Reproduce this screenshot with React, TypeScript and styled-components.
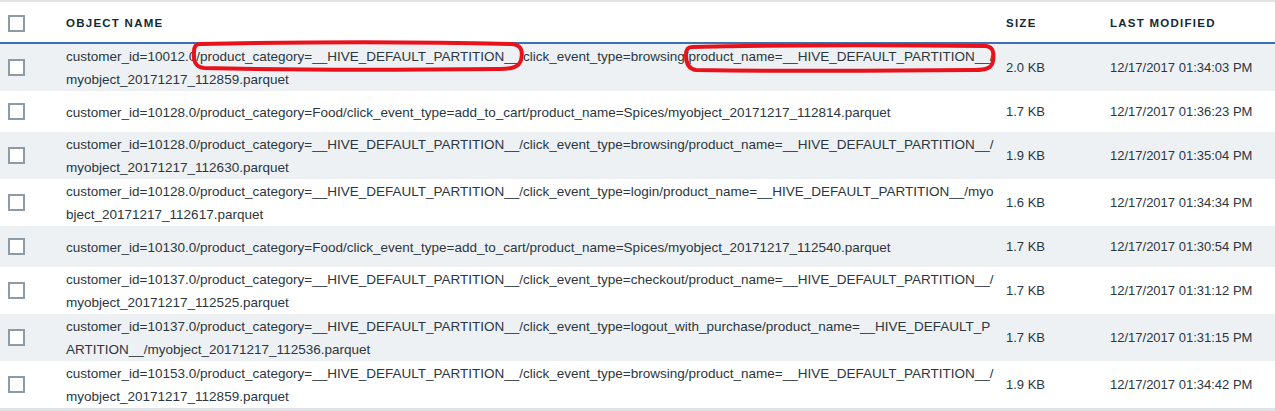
import React from 'react';
import styled, { createGlobalStyle } from 'styled-components';

const GlobalStyle = createGlobalStyle`
    html, body {
        margin: 0;
        padding: 0;
        background: #ffffff;
    }
    body {
        font-family: "Liberation Sans", Arial, sans-serif;
        color: #2b3641;
    }
`;

type ObjectRow = {
    lines: string[];
    size: string;
    modified: string;
};

const rows: ObjectRow[] = [
    {
        lines: [
            'customer_id=10012.0/product_category=__HIVE_DEFAULT_PARTITION__/click_event_type=browsing/product_name=__HIVE_DEFAULT_PARTITION__/',
            'myobject_20171217_112859.parquet',
        ],
        size: '2.0 KB',
        modified: '12/17/2017 01:34:03 PM',
    },
    {
        lines: ['customer_id=10128.0/product_category=Food/click_event_type=add_to_cart/product_name=Spices/myobject_20171217_112814.parquet'],
        size: '1.7 KB',
        modified: '12/17/2017 01:36:23 PM',
    },
    {
        lines: [
            'customer_id=10128.0/product_category=__HIVE_DEFAULT_PARTITION__/click_event_type=browsing/product_name=__HIVE_DEFAULT_PARTITION__/',
            'myobject_20171217_112630.parquet',
        ],
        size: '1.9 KB',
        modified: '12/17/2017 01:35:04 PM',
    },
    {
        lines: [
            'customer_id=10128.0/product_category=__HIVE_DEFAULT_PARTITION__/click_event_type=login/product_name=__HIVE_DEFAULT_PARTITION__/myo',
            'bject_20171217_112617.parquet',
        ],
        size: '1.6 KB',
        modified: '12/17/2017 01:34:34 PM',
    },
    {
        lines: ['customer_id=10130.0/product_category=Food/click_event_type=add_to_cart/product_name=Spices/myobject_20171217_112540.parquet'],
        size: '1.7 KB',
        modified: '12/17/2017 01:30:54 PM',
    },
    {
        lines: [
            'customer_id=10137.0/product_category=__HIVE_DEFAULT_PARTITION__/click_event_type=checkout/product_name=__HIVE_DEFAULT_PARTITION__/',
            'myobject_20171217_112525.parquet',
        ],
        size: '1.7 KB',
        modified: '12/17/2017 01:31:12 PM',
    },
    {
        lines: [
            'customer_id=10137.0/product_category=__HIVE_DEFAULT_PARTITION__/click_event_type=logout_with_purchase/product_name=__HIVE_DEFAULT_P',
            'ARTITION__/myobject_20171217_112536.parquet',
        ],
        size: '1.7 KB',
        modified: '12/17/2017 01:31:15 PM',
    },
    {
        lines: [
            'customer_id=10153.0/product_category=__HIVE_DEFAULT_PARTITION__/click_event_type=browsing/product_name=__HIVE_DEFAULT_PARTITION__/',
            'myobject_20171217_112859.parquet',
        ],
        size: '1.9 KB',
        modified: '12/17/2017 01:34:42 PM',
    },
];

const Page = styled.div`
    position: relative;
    width: 1275px;
    height: 411px;
    overflow: hidden;
    border-top: 2px solid #dfe3e6;
    background: #dfe3e6;
`;

const Table = styled.div`
    display: flex;
    flex-direction: column;
    background: #ffffff;
`;

const columns = '66px 940px 104px 1fr';

const HeaderRow = styled.div`
    display: grid;
    grid-template-columns: ${columns};
    align-items: center;
    height: 38px;
    padding-top: 2px;
    border-bottom: 2px solid #3d70b2;
    background: #ffffff;
`;

const HeaderCell = styled.div`
    font-size: 11.5px;
    font-weight: 700;
    letter-spacing: 1.25px;
    text-transform: uppercase;
    color: #152935;
`;

const Row = styled.div<{ $striped: boolean; $tall: boolean }>`
    display: grid;
    grid-template-columns: ${columns};
    align-items: center;
    height: ${p => (p.$tall ? 47 : 41)}px;
    background: ${p => (p.$striped ? '#eef1f4' : '#ffffff')};
`;

const CheckCell = styled.div`
    display: flex;
    align-items: center;
    padding-left: 8px;
`;

const Checkbox = styled.span`
    display: block;
    box-sizing: border-box;
    width: 17px;
    height: 17px;
    border: 2px solid #8c9ba5;
    background: #ffffff;
`;

const NameCell = styled.div`
    font-size: 13.5px;
    line-height: 23px;
    padding-top: 1px;
`;

const NameLine = styled.div`
    white-space: nowrap;
`;

const Cell = styled.div`
    font-size: 13px;
    line-height: 23px;
    white-space: nowrap;
`;

const Annotations = styled.svg`
    position: absolute;
    left: 0;
    top: -2px;
    pointer-events: none;
`;

export default function App() {
    return (
        <>
            <GlobalStyle />
            <Page>
                <Table>
                    <HeaderRow>
                        <CheckCell>
                            <Checkbox />
                        </CheckCell>
                        <HeaderCell>Object Name</HeaderCell>
                        <HeaderCell>Size</HeaderCell>
                        <HeaderCell>Last Modified</HeaderCell>
                    </HeaderRow>
                    {rows.map((row, i) => (
                        <Row key={i} $striped={i % 2 === 0} $tall={row.lines.length > 1}>
                            <CheckCell>
                                <Checkbox />
                            </CheckCell>
                            <NameCell>
                                {row.lines.map((line, j) => (
                                    <NameLine key={j}>{line}</NameLine>
                                ))}
                            </NameCell>
                            <Cell>{row.size}</Cell>
                            <Cell>{row.modified}</Cell>
                        </Row>
                    ))}
                </Table>
                {/* hand-drawn red highlight marks */}
                <Annotations width="1275" height="411" viewBox="0 0 1275 411">
                    <path
                        d="M200 44 C300 42 430 42 512 44 C522 45 523 52 521 60 C519 67 512 69 500 69 C400 70 280 70 204 68 C195 67 193 60 194 52 C194 46 196 44 200 44 Z"
                        fill="none"
                        stroke="#e8121c"
                        strokeWidth="4"
                    />
                    <path
                        d="M692 47 C780 45 900 45 986 46 C994 47 994 54 993 61 C992 68 986 70 975 70 C880 71 770 71 696 70 C688 69 686 62 686 55 C686 49 688 47 692 47 Z"
                        fill="none"
                        stroke="#e8121c"
                        strokeWidth="4"
                    />
                </Annotations>
            </Page>
        </>
    );
}
